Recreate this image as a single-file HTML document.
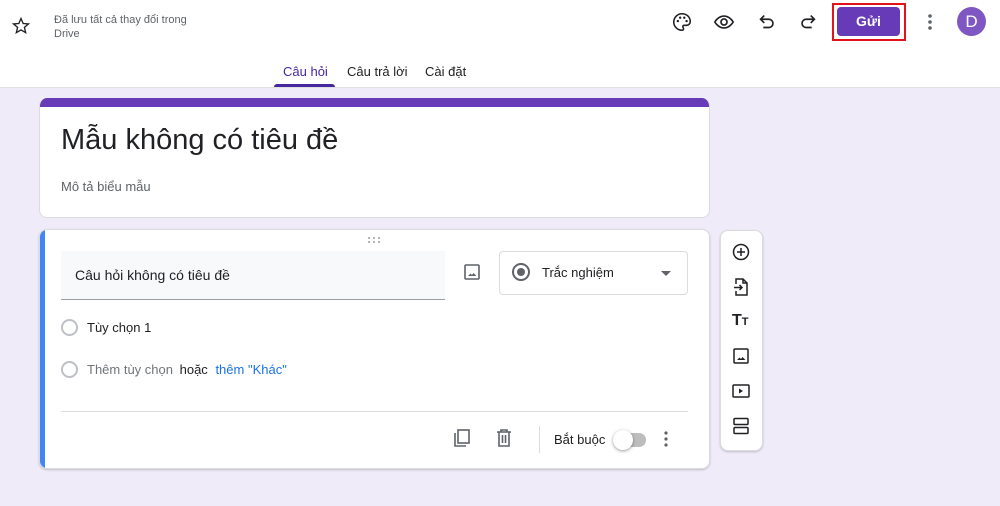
<!DOCTYPE html>
<html><head><meta charset="utf-8"><style>
*{box-sizing:border-box;margin:0;padding:0}
body{width:1000px;height:506px;overflow:hidden;background:#f0ebf8;font-family:"Liberation Sans",sans-serif;color:#202124;position:relative}
.abs{position:absolute}
.hdr{left:0;top:0;width:1000px;height:88px;background:#fff;border-bottom:1px solid #e0e0e0}
.card{background:#fff;border-radius:8px;border:1px solid #dadce0}
svg{display:block}
</style></head><body>
<div class="abs hdr"></div>
<svg class="abs" style="left:11px;top:16px" width="20" height="20" viewBox="0 0 24 24"><path d="M12 3l2.6 6 6.4.5-4.9 4.2 1.5 6.3L12 16.7 6.4 20l1.5-6.3L3 9.5l6.4-.5z" fill="none" stroke="#202124" stroke-width="1.6"/></svg>
<div class="abs" style="left:54px;top:13px;font-size:11px;color:#5f6368;line-height:14px">Đã lưu tất cả thay đổi trong<br>Drive</div>
<svg class="abs" style="left:671px;top:11px" width="22" height="22" viewBox="0 0 24 24"><path d="M12 3a9 9 0 000 18c1.2 0 1.7-.8 1.7-1.6 0-1-.8-1.3-.8-2.2 0-1 .8-1.6 1.8-1.6H17a4 4 0 004-4C21 6.6 17 3 12 3z" fill="none" stroke="#202124" stroke-width="1.7"/><circle cx="7.5" cy="11" r="1.3" fill="#202124"/><circle cx="10" cy="7.3" r="1.3" fill="#202124"/><circle cx="14.5" cy="7.3" r="1.3" fill="#202124"/><circle cx="17" cy="11" r="1.3" fill="#202124"/></svg>
<svg class="abs" style="left:713px;top:11px" width="22" height="22" viewBox="0 0 24 24"><path d="M2 12s3.6-6.5 10-6.5S22 12 22 12s-3.6 6.5-10 6.5S2 12 2 12z" fill="none" stroke="#202124" stroke-width="1.8"/><circle cx="12" cy="12" r="3.3" fill="none" stroke="#202124" stroke-width="1.8"/></svg>
<svg class="abs" style="left:756px;top:11px" width="22" height="22" viewBox="0 0 24 24"><path d="M9 5L5 9l4 4M5 9h9a4.5 4.5 0 010 9H8" fill="none" stroke="#202124" stroke-width="1.8"/></svg>
<svg class="abs" style="left:797px;top:11px" width="22" height="22" viewBox="0 0 24 24"><path d="M15 5l4 4-4 4M19 9h-9a4.5 4.5 0 000 9h6" fill="none" stroke="#202124" stroke-width="1.8"/></svg>
<div class="abs" style="left:832px;top:3px;width:74px;height:38px;border:2px solid #e2141b"></div>
<div class="abs" style="left:837px;top:7px;width:63px;height:29px;background:#673ab7;border-radius:4px;color:#fff;font-size:14px;font-weight:bold;text-align:center;line-height:29px">Gửi</div>
<svg class="abs" style="left:920px;top:11px" width="20" height="22" viewBox="0 0 20 22"><circle cx="10" cy="5" r="1.8" fill="#5f6368"/><circle cx="10" cy="11" r="1.8" fill="#5f6368"/><circle cx="10" cy="17" r="1.8" fill="#5f6368"/></svg>
<div class="abs" style="left:957px;top:7px;width:29px;height:29px;border-radius:50%;background:#7e57c2;color:#fff;font-size:17px;text-align:center;line-height:29px">D</div>
<div class="abs" style="left:283px;top:64px;font-size:13px;color:#4527a0">Câu hỏi</div>
<div class="abs" style="left:274px;top:84px;width:61px;height:3px;background:#4527a0;border-radius:3px 3px 0 0"></div>
<div class="abs" style="left:347px;top:64px;font-size:13px">Câu trả lời</div>
<div class="abs" style="left:425px;top:64px;font-size:13px">Cài đặt</div>
<div class="abs card" style="left:39px;top:98px;width:671px;height:120px;overflow:hidden;border-top:none">
<div style="height:9px;background:#673ab7"></div></div>
<div class="abs" style="left:61px;top:124px;font-size:29px;color:#202124">Mẫu không có tiêu đề</div>
<div class="abs" style="left:61px;top:179px;font-size:13px;color:#5f6368">Mô tả biểu mẫu</div>
<div class="abs card" style="left:39px;top:229px;width:671px;height:240px;overflow:hidden;box-shadow:0 1px 2px rgba(0,0,0,.2)"><div style="width:5px;height:100%;background:#4285f4"></div></div>
<svg class="abs" style="left:367px;top:236px" width="14" height="8" viewBox="0 0 14 8"><g fill="#9aa0a6"><circle cx="2" cy="2" r="1"/><circle cx="7" cy="2" r="1"/><circle cx="12" cy="2" r="1"/><circle cx="2" cy="6" r="1"/><circle cx="7" cy="6" r="1"/><circle cx="12" cy="6" r="1"/></g></svg>
<div class="abs" style="left:61px;top:251px;width:384px;height:49px;background:#f8f9fa;border-bottom:1px solid #9aa0a6"></div>
<div class="abs" style="left:75px;top:267px;font-size:14px">Câu hỏi không có tiêu đề</div>
<svg class="abs" style="left:462px;top:262px" width="20" height="20" viewBox="0 0 20 20"><rect x="3" y="3" width="14" height="14" rx="1" fill="none" stroke="#5f6368" stroke-width="1.6"/><path d="M6 14l2.5-2.5 1.5 1.5 1.5-2 3 3z" fill="#5f6368"/></svg>
<div class="abs" style="left:499px;top:251px;width:189px;height:44px;border:1px solid #dadce0;border-radius:4px"></div>
<div class="abs" style="left:512px;top:263px;width:18px;height:18px;border:2px solid #5f6368;border-radius:50%"><div style="margin:3px;width:8px;height:8px;border-radius:50%;background:#5f6368"></div></div>
<div class="abs" style="left:542px;top:265px;font-size:13px">Trắc nghiệm</div>
<div class="abs" style="left:661px;top:271px;width:0;height:0;border-left:5px solid transparent;border-right:5px solid transparent;border-top:5px solid #5f6368"></div>
<div class="abs" style="left:61px;top:319px;width:17px;height:17px;border:2px solid #bdc1c6;border-radius:50%"></div>
<div class="abs" style="left:87px;top:320px;font-size:13px">Tùy chọn 1</div>
<div class="abs" style="left:61px;top:361px;width:17px;height:17px;border:2px solid #bdc1c6;border-radius:50%"></div>
<div class="abs" style="left:87px;top:362px;font-size:13px;color:#70757a">Thêm tùy chọn <span style="color:#202124;margin-left:3px">hoặc</span> <span style="color:#1a73e8;margin-left:4px">thêm "Khác"</span></div>
<div class="abs" style="left:61px;top:411px;width:627px;height:1px;background:#dadce0"></div>
<svg class="abs" style="left:452px;top:428px" width="20" height="20" viewBox="0 0 20 20"><path d="M3 5v13h11" fill="none" stroke="#5f6368" stroke-width="1.6"/><rect x="6" y="2" width="11" height="13" fill="none" stroke="#5f6368" stroke-width="1.6"/></svg>
<svg class="abs" style="left:494px;top:428px" width="20" height="20" viewBox="0 0 20 20"><path d="M3 4h14M7 4V2h6v2M5 4v14h10V4M8.5 7v8M11.5 7v8" fill="none" stroke="#5f6368" stroke-width="1.6"/></svg>
<div class="abs" style="left:539px;top:426px;width:1px;height:27px;background:#dadce0"></div>
<div class="abs" style="left:554px;top:432px;font-size:13px">Bắt buộc</div>
<div class="abs" style="left:616px;top:433px;width:30px;height:14px;border-radius:7px;background:#bdbdbd"></div>
<div class="abs" style="left:613px;top:430px;width:20px;height:20px;border-radius:50%;background:#fff;box-shadow:0 1px 3px rgba(0,0,0,.4)"></div>
<svg class="abs" style="left:658px;top:429px" width="16" height="20" viewBox="0 0 16 20"><circle cx="8" cy="4" r="1.6" fill="#5f6368"/><circle cx="8" cy="10" r="1.6" fill="#5f6368"/><circle cx="8" cy="16" r="1.6" fill="#5f6368"/></svg>
<div class="abs card" style="left:720px;top:230px;width:43px;height:221px;box-shadow:0 1px 2px rgba(0,0,0,.2)"></div>
<svg class="abs" style="left:731px;top:242px" width="20" height="20" viewBox="0 0 20 20"><circle cx="10" cy="10" r="7.5" fill="none" stroke="#202124" stroke-width="1.5"/><path d="M10 6v8M6 10h8" stroke="#202124" stroke-width="1.5"/></svg>
<svg class="abs" style="left:731px;top:277px" width="20" height="20" viewBox="0 0 20 20"><path d="M5 7V2h7l4 4v12H5v-4M12 2v4h4M3 10.5h8M8.5 8l2.5 2.5-2.5 2.5" fill="none" stroke="#202124" stroke-width="1.5"/></svg>
<div class="abs" style="left:732px;top:312px;font-size:16px;font-weight:bold;color:#202124">T<span style="font-size:11px">T</span></div>
<svg class="abs" style="left:731px;top:346px" width="20" height="20" viewBox="0 0 20 20"><rect x="3" y="3" width="14" height="14" rx="1" fill="none" stroke="#202124" stroke-width="1.5"/><path d="M6 14l2.5-2.5 1.5 1.5 1.5-2 3 3z" fill="#202124"/></svg>
<svg class="abs" style="left:731px;top:381px" width="20" height="20" viewBox="0 0 20 20"><rect x="2" y="4" width="16" height="12" rx="1" fill="none" stroke="#202124" stroke-width="1.5"/><path d="M8 7.5v5l4-2.5z" fill="#202124"/></svg>
<svg class="abs" style="left:731px;top:416px" width="20" height="20" viewBox="0 0 20 20"><rect x="3" y="2.5" width="14" height="6" rx="1" fill="none" stroke="#202124" stroke-width="1.5"/><rect x="3" y="11.5" width="14" height="6" rx="1" fill="none" stroke="#202124" stroke-width="1.5"/></svg>
</body></html>
